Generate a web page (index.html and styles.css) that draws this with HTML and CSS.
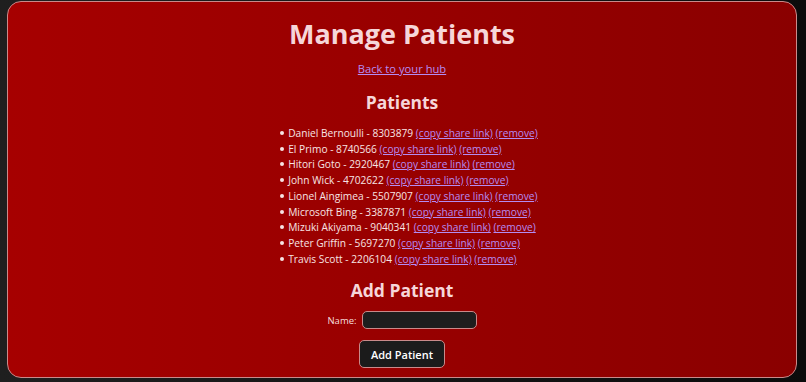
FILE: index.html
```html
<!DOCTYPE html>
<html>
<head>
<meta charset="utf-8">
<title>Manage Patients</title>
<link rel="stylesheet" href="styles.css">
</head>
<body>
<main class="card">
  <h1 class="title">Manage Patients</h1>
  <a class="hub-link" href="#">Back to your hub</a>
  <h2 class="section-title">Patients</h2>
  <ul class="patients">
    <li>Daniel Bernoulli - 8303879 <a href="#">(copy share link)</a> <a href="#">(remove)</a></li>
    <li>El Primo - 8740566 <a href="#">(copy share link)</a> <a href="#">(remove)</a></li>
    <li>Hitori Goto - 2920467 <a href="#">(copy share link)</a> <a href="#">(remove)</a></li>
    <li>John Wick - 4702622 <a href="#">(copy share link)</a> <a href="#">(remove)</a></li>
    <li>Lionel Aingimea - 5507907 <a href="#">(copy share link)</a> <a href="#">(remove)</a></li>
    <li>Microsoft Bing - 3387871 <a href="#">(copy share link)</a> <a href="#">(remove)</a></li>
    <li>Mizuki Akiyama - 9040341 <a href="#">(copy share link)</a> <a href="#">(remove)</a></li>
    <li>Peter Griffin - 5697270 <a href="#">(copy share link)</a> <a href="#">(remove)</a></li>
    <li>Travis Scott - 2206104 <a href="#">(copy share link)</a> <a href="#">(remove)</a></li>
  </ul>
  <h2 class="section-title add-title">Add Patient</h2>
  <form class="add-form">
    <label class="field">Name: <input class="name-input" type="text"></label>
    <button class="add-btn" type="button">Add Patient</button>
  </form>
</main>
</body>
</html>
```

FILE: styles.css
```css
html, body {
  margin: 0;
  padding: 0;
}
body {
  width: 806px;
  height: 382px;
  overflow: hidden;
  background: linear-gradient(to right, #1f1f1f, #0b0b0b);
  font-family: "Open Sans", "Noto Sans", sans-serif;
  box-sizing: border-box;
  padding: 1px 9px 4px 7px;
}
.card {
  box-sizing: border-box;
  height: 377px;
  border: 1px solid #c98a8a;
  border-radius: 14px;
  background: linear-gradient(to right, #a60000, #8a0000);
  display: flex;
  flex-direction: column;
  align-items: center;
  color: #f6dede;
}
.title {
  margin: 14px 0 0;
  font-size: 27px;
  line-height: 36px;
  font-weight: 700;
  color: #f6d6d9;
}
.hub-link {
  margin-top: 9px;
  font-size: 11.2px;
  line-height: 16px;
  font-weight: 500;
  color: #b48cf2;
  text-decoration: underline;
}
.section-title {
  margin: 12px 0 0;
  font-size: 17.5px;
  line-height: 26px;
  font-weight: 700;
  color: #f6d6d9;
}
.patients {
  margin: 11px 0 0;
  padding: 0 0 0 22px;
  list-style: none;
  font-size: 10.2px;
  line-height: 15.7px;
  color: #f7e4e4;
}
.patients li::before {
  content: "";
  display: inline-block;
  width: 4px;
  height: 4px;
  border-radius: 50%;
  background: #f7e4e4;
  margin-left: -8px;
  margin-right: 4px;
  vertical-align: 2px;
}
.patients a {
  color: #b48cf2;
}
.add-title {
  margin-top: 10px;
}
.add-form {
  margin-top: 8px;
  display: flex;
  flex-direction: column;
  align-items: center;
  gap: 12px;
}
.field {
  font-size: 9.5px;
  color: #f6dede;
  display: flex;
  align-items: center;
  gap: 5px;
}
.name-input {
  box-sizing: border-box;
  width: 115px;
  height: 18px;
  border: 1px solid #c98a8a;
  border-radius: 5px;
  background: #1e1e1e;
  color: #fff;
  padding: 0 6px;
}
.add-btn {
  box-sizing: border-box;
  width: 86px;
  height: 28px;
  margin-top: -1px;
  border: 1px solid #c98a8a;
  border-radius: 5px;
  background: #1b1b1b;
  color: #ffffff;
  font-family: inherit;
  font-size: 11px;
  font-weight: 600;
}
```
